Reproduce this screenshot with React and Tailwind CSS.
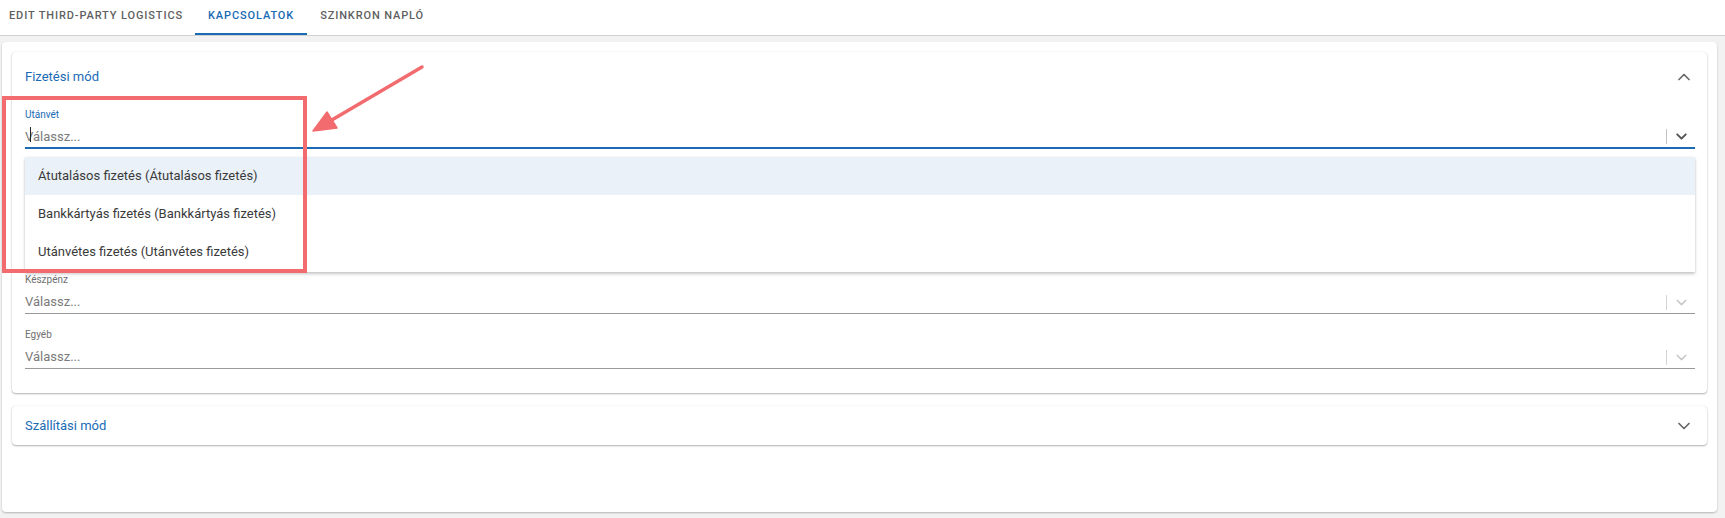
import { ChevronDown, ChevronUp } from 'lucide-react';

const tabs = [
  { label: 'Edit Third-Party Logistics', first: true },
  { label: 'Kapcsolatok', active: true },
  { label: 'Szinkron napló' },
];

const options = [
  'Átutalásos fizetés (Átutalásos fizetés)',
  'Bankkártyás fizetés (Bankkártyás fizetés)',
  'Utánvétes fizetés (Utánvétes fizetés)',
];

// the two middle selects sit under the open menu, only their space shows
const fields = [
  { key: 'utanvet', label: 'Utánvét', open: true },
  { key: 'h1', hidden: true },
  { key: 'h2', hidden: true },
  { key: 'keszpenz', label: 'Készpénz' },
  { key: 'egyeb', label: 'Egyéb' },
];

function SelectField({ label, open, hidden }) {
  if (hidden) return <div className="h-[41px]" />;
  return (
    <div className="relative">
      <div className={`h-[14px] text-[10px] leading-[14px] ${open ? 'text-[#1a6ab5]' : 'text-[#6f6f6f]'}`}>{label}</div>
      <div
        className={`relative mt-[4px] flex h-[23px] items-center ${
          open ? 'border-b-2 border-[#1a6ab5]' : 'border-b border-[#9a9a9a]'
        }`}
      >
        {open && <span className="absolute left-[5px] top-[1px] h-[15px] w-[1px] bg-[#222]" />}
        <span className="flex-1 text-[13px] text-[#7a7a7a]">Válassz...</span>
        <span className={`h-[15px] w-[1px] ${open ? 'bg-[#c4c4c4]' : 'bg-[#d4d4d4]'}`} />
        <span className="flex w-[28px] justify-center">
          <ChevronDown
            size={17}
            strokeWidth={open ? 2.8 : 2}
            className={open ? 'text-[#555]' : 'text-[#c8c8c8]'}
          />
        </span>
      </div>
      {open && (
        <div className="absolute left-0 right-0 top-[calc(100%+8px)] z-10 bg-white pb-[1px] shadow-[0_2px_3px_rgba(0,0,0,0.22),0_0_1px_rgba(0,0,0,0.12)]">
          {options.map((o, i) => (
            <div
              key={o}
              className={`flex h-[38px] items-center pl-[13px] text-[13px] text-[#3a3a3a] ${i === 0 ? 'bg-[#eaf1f8]' : ''}`}
            >
              {o}
            </div>
          ))}
        </div>
      )}
    </div>
  );
}

export default function App() {
  return (
    <div className="relative h-[518px] w-full overflow-hidden bg-[#f2f2f2] font-['Roboto','Liberation_Sans',sans-serif]">
      <div className="flex h-[36px] border-b border-[#d0d0d0] bg-white">
        {tabs.map((t) => (
          <div
            key={t.label}
            className={`flex h-[35px] items-center border-b-2 pb-[1px] text-[11px] font-medium uppercase tracking-[0.08em] ${
              t.first ? 'pl-[9px] pr-[12px]' : 'px-[13px]'
            } ${t.active ? 'border-[#1a6ab5] text-[#1a6ab5]' : 'border-transparent text-[#5f5f5f]'}`}
          >
            {t.label}
          </div>
        ))}
      </div>

      <div className="ml-[2px] mr-[8px] mt-[6px] h-[470px] rounded-[4px] bg-white p-[10px] shadow-[0_1px_2px_rgba(0,0,0,0.25)]">
        <div className="rounded-[4px] bg-white pb-[24px] shadow-[0_1px_2px_rgba(0,0,0,0.3),0_0_1px_rgba(0,0,0,0.12)]">
          <div className="flex h-[50px] items-center justify-between pl-[13px] pr-[13px]">
            <span className="text-[13px] text-[#1a6ab5]">Fizetési mód</span>
            <ChevronUp size={20} strokeWidth={2} className="text-[#666]" />
          </div>
          <div className="flex flex-col gap-[14px] pl-[13px] pr-[12px] pt-[6px]">
            {fields.map(({ key, ...f }) => (
              <SelectField key={key} {...f} />
            ))}
          </div>
        </div>

        <div className="mt-[13px] flex h-[39px] items-center justify-between rounded-[4px] bg-white pl-[13px] pr-[13px] shadow-[0_1px_2px_rgba(0,0,0,0.3),0_0_1px_rgba(0,0,0,0.12)]">
          <span className="text-[13px] text-[#1a6ab5]">Szállítási mód</span>
          <ChevronDown size={20} strokeWidth={2} className="text-[#666]" />
        </div>
      </div>

      <svg className="pointer-events-none absolute inset-0 z-20" width="1725" height="518">
        <rect x="4" y="98" width="301" height="173" fill="none" stroke="#f26b6e" strokeWidth="4" />
        <line x1="422" y1="67" x2="325" y2="124" stroke="#f26b6e" strokeWidth="3.5" strokeLinecap="round" />
        <polygon points="313,131 327,112 337,128" fill="#f26b6e" stroke="#f26b6e" strokeWidth="1.5" strokeLinejoin="round" />
      </svg>
    </div>
  );
}
